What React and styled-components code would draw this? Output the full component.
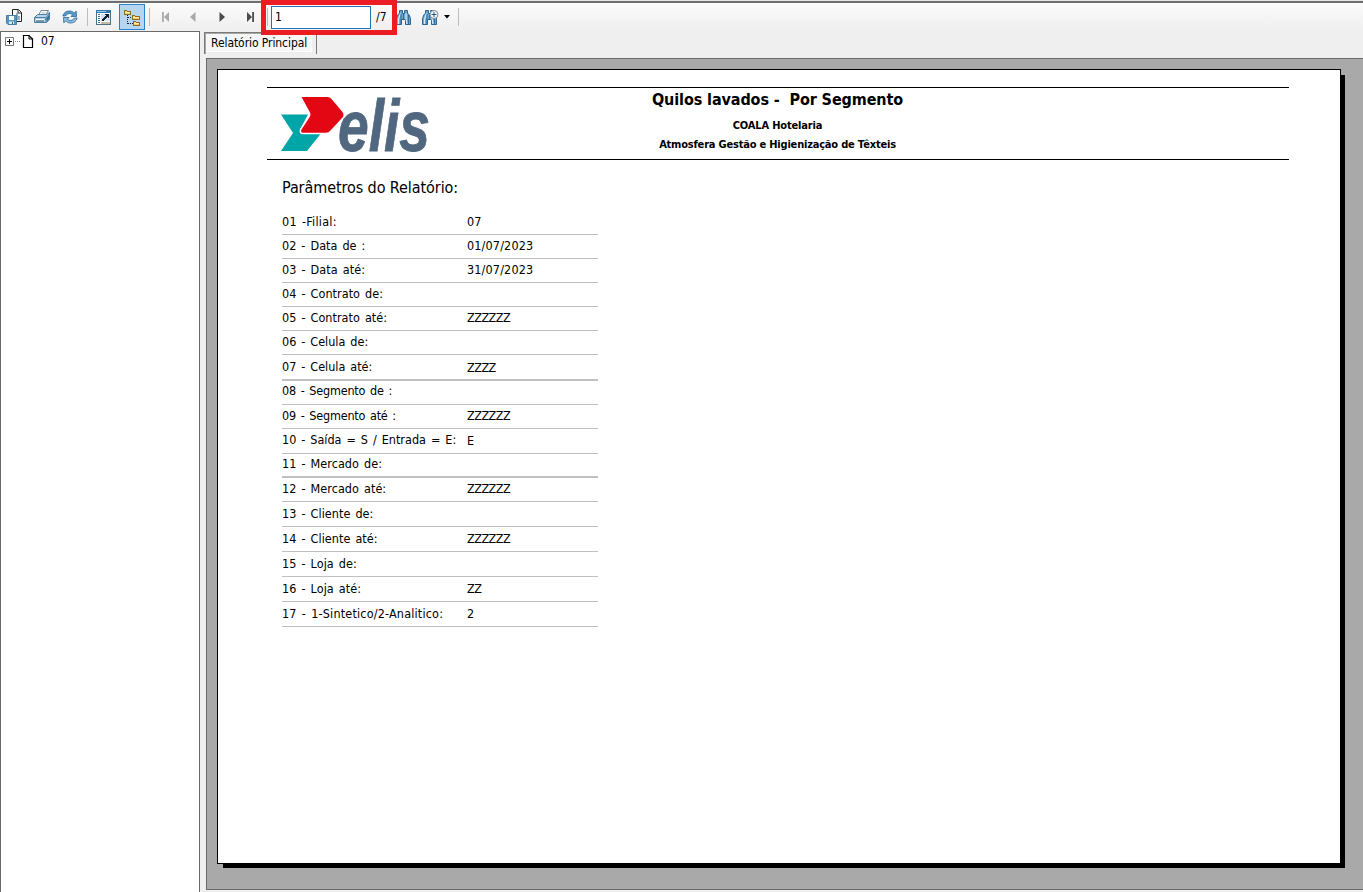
import React from "react";
import styled, { createGlobalStyle } from "styled-components";

const Global = createGlobalStyle`
  * { box-sizing: border-box; }
  body { margin: 0; overflow: hidden; }
`;

const Window = styled.div`
  width: 1363px;
  height: 892px;
  display: flex;
  flex-direction: column;
  background: #efefef;
  color: #000;
  font-family: "DejaVu Sans Condensed", "DejaVu Sans", sans-serif;
  font-stretch: condensed;
  font-size: 12px;
`;

const Toolbar = styled.div`
  position: relative;
  height: 31px;
  flex: none;
  display: flex;
  align-items: center;
  border-top: 1px solid #e6e6e6;
  padding-top: 2px;
  background: linear-gradient(#6e6e6e 0 2px, #fbfbfb 2px, #efefef 100%);
`;

const ToolButton = styled.div`
  width: ${(p) => p.$width || 28}px;
  height: 26px;
  flex: none;
  display: flex;
  align-items: center;
  justify-content: center;
  margin-left: ${(p) => (p.$active ? 2 : 0)}px;
  border: 1px solid ${(p) => (p.$active ? "#2a83c9" : "transparent")};
  background: ${(p) => (p.$active ? "#b5d5f0" : "transparent")};
  svg { display: block; flex: none; }
`;

const Divider = styled.div`
  width: 1px;
  height: 18px;
  flex: none;
  margin: 0 ${(p) => p.$after || 0}px 0 ${(p) => p.$before || 0}px;
  background: #bdbdbd;
`;

const PageInput = styled.input`
  width: 100px;
  height: 23px;
  flex: none;
  margin: 0;
  border: 1px solid #1f72b5;
  border-radius: 0;
  padding: 0 3px 1px;
  outline: none;
  background: #fff;
  color: #000;
  font: 12px "DejaVu Sans Condensed", sans-serif;
`;

const PageTotal = styled.span`
  width: 20px;
  padding-left: 5px;
  white-space: nowrap;
`;

const Highlight = styled.div`
  position: absolute;
  left: 261px;
  top: -1px;
  width: 136px;
  height: 35px;
  border: 5px solid #ec1c24;
  z-index: 2;
`;

const Body = styled.div`
  flex: 1;
  min-height: 0;
  display: flex;
`;

const TreePanel = styled.div`
  width: 200px;
  flex: none;
  border: solid #696969;
  border-width: 1px 1px 0 1px;
  background: #fff;
`;

const TreeNode = styled.div`
  height: 19px;
  display: flex;
  align-items: center;
  padding-left: 3px;
  svg { display: block; }
  span { margin: -2px 0 0 7px; }
`;

const Viewer = styled.div`
  flex: 1;
  min-width: 0;
  display: flex;
  flex-direction: column;
  padding: 1px 0 2px 4px;
`;

const Tab = styled.div`
  width: 113px;
  height: 22px;
  padding: 3px 0 0 6px;
  border: solid #7a7a7a;
  border-width: 1px 1px 0 1px;
  box-shadow: inset 1px 1px 0 #a8a8a8, inset -4px -2px 0 #efefef, inset -5px -3px 0 #fff;
  background: #f6f6f6;
  line-height: 15px;
  font-size: 12px;
  letter-spacing: -0.07px;
  white-space: nowrap;
`;

const Canvas = styled.div`
  flex: 1;
  margin: 4px 0 0 2px;
  padding: 10px 0 0 10px;
  border: solid #696969;
  border-width: 1px 0 1px 1px;
  background: #a9a9a9;
  overflow: hidden;
`;

const Paper = styled.div`
  width: 1124px;
  height: 795px;
  padding: 17px 51px 0 49px;
  border: 1px solid #000;
  background: #fff;
  box-shadow: 4px 4px 0 0 #000;
  clip-path: polygon(0 0, 100% 0, 100% 6px, calc(100% + 4px) 6px, calc(100% + 4px) calc(100% + 4px), 6px calc(100% + 4px), 6px 100%, 0 100%);
`;

const ReportHeader = styled.header`
  width: 1022px;
  height: 73px;
  display: flex;
  border: solid #000;
  border-width: 1px 0;
  svg { display: block; flex: none; margin: 8px 0 0 13px; overflow: visible; }
`;

const Titles = styled.div`
  width: 631px;
  margin-left: 7px;
  display: flex;
  flex-direction: column;
  align-items: center;
  font-weight: bold;
  white-space: pre;
`;

const Title = styled.div`
  margin-top: 2px;
  line-height: 20px;
  font-size: 16px;
  letter-spacing: -0.1px;
`;

const Subtitle = styled.div`
  margin-top: ${(p) => p.$gap}px;
  line-height: 14px;
  font-size: 11px;
  letter-spacing: ${(p) => p.$spacing}px;
`;

const SectionTitle = styled.h2`
  margin: 18px 0 13px 15px;
  line-height: 20px;
  font-size: 16px;
  font-weight: normal;
  letter-spacing: -0.08px;
  white-space: nowrap;
`;

const Params = styled.div`
  width: 316px;
  margin-left: 15px;
`;

const ParamRow = styled.div`
  height: ${(p) => p.$height}px;
  display: flex;
  align-items: flex-end;
  border-bottom: ${(p) => p.$line}px solid #c0c0c0;
  padding-bottom: ${(p) => p.$gap}px;
  line-height: 16px;
  font-size: 12.5px;
  white-space: nowrap;
`;

const Label = styled.span`
  width: 185px;
  letter-spacing: ${(p) => p.$spacing}px;
  word-spacing: 1.4px;
`;

const Value = styled.span`
  margin-bottom: ${(p) => -p.$drop}px;
  letter-spacing: ${(p) => p.$spacing}px;
`;

const SaveIcon = () => (
  <svg width="16" height="16">
    <path d="M6.500 .5h6l3 3v9h-9z" fill="#fff" stroke="#222" />
    <path d="M12 1v3h3" fill="none" stroke="#222" />
    <path d="M9 11V6M11 11V4M13 11V7" stroke="#245b85" />
    <path d="M.5 6.500h10v9H2l-1.500-1.500z" fill="#5c94bd" stroke="#4a7ea5" />
    <path d="M3 7h5v4H3z" fill="#fff" />
    <path d="M3 12.500h5V15H3z" fill="#dbeaf5" />
    <path d="M6 13h1v2H6z" fill="#33617f" />
  </svg>
);

const PrintIcon = () => (
  <svg width="16" height="16">
    <path d="M4.500 6.500 7 1.500h7.500l-3 5z" fill="#fff" stroke="#7c8b98" />
    <path d="M7.500 4h4" stroke="#a9bac8" />
    <path d="m.5 8.500 3-3h9l3-2v7l-3 3H.5z" fill="#b7d4ea" stroke="#4a7da3" />
    <path d="M.5 8.500h11.500v5M12 8.500l3.500-4" fill="none" stroke="#4a7da3" />
    <path d="M2 10h8v1.500H2z" fill="#fff" />
    <path d="M2 12h8" stroke="#27506f" />
    <path d="M12.500 9 15 6v4l-2.500 3z" fill="#326f9c" />
    <path d="M11 10h1v1h-1z" fill="#3aa843" />
  </svg>
);

const RefreshIcon = () => (
  <svg width="16" height="14">
    <path d="M.8 6C1.800 2.500 4.500 .8 8 1c2 .2 3.200 1 4.200 2l2-1.800.3 5.300H9l1.600-1.800C8.500 3 5.500 3 3.500 6z" fill="#5b9bc9" stroke="#2a6797" strokeWidth=".8" />
    <path d="M15.200 8c-1 3.500-3.700 5.200-7.200 5-2-.2-3.200-1-4.200-2l-2 1.800L1.500 7.500H7L5.400 9.300C7.500 11 10.500 11 12.500 8z" fill="#8cbcdf" stroke="#2a6797" strokeWidth=".8" />
  </svg>
);

const PreviewIcon = () => (
  <svg width="15" height="15" shapeRendering="crispEdges">
    <path d="M.5 .5h14v14H.5z" fill="#fff" stroke="#4f7186" />
    <path d="M0 0h15v3H0z" fill="#2f78b0" />
    <path d="M1 1h9v1H1z" fill="#9cc9e8" />
    <path d="M2 4h2v1H2zM2 6h2v1H2zM2 8h2v1H2zM2 10h2v1H2zM2 12h2v1H2z" fill="#356f94" />
    <path d="M5 4h9v7H5z" fill="#cfe5f4" />
    <path d="M9 4h4v4h-1V7h-1v1h-1v1H9v1H8v1H6V9h1V8h1V7h1V6h1V5H9z" fill="#15222c" />
    <path d="M5 12h9v2H5z" fill="#c2bba5" />
  </svg>
);

const TreeIcon = () => (
  <svg width="16" height="17" shapeRendering="crispEdges">
    <path d="M3.500 6v9M4 8.500h4M4 14.500h5" fill="none" stroke="#222" strokeDasharray="1 1" />
    <path d="M.5 1.500h2l1 1h3v3h-6zM8.500 6.500h2l1 1h4v3h-7zM9.500 12.500h2l1 1h3v3h-6z" fill="#f5cd62" stroke="#8d6b28" />
    <path d="M1 3h5v1H1zM9 8h6v1H9zM10 14h5v1h-5z" fill="#ffe99d" />
  </svg>
);

const Arrow = ({ dir, bar, color }) => (
  <svg width="8" height="10">
    <g transform={dir === "left" ? "translate(8 0) scale(-1 1)" : undefined} fill={color}>
      <path d={bar ? "M0 0l5 5-5 5z" : "M1.500 0l5.500 5-5.500 5z"} />
      {bar && <path d="M5.200 0H7v10H5.200z" />}
    </g>
  </svg>
);

const Binoculars = ({ plus }) => (
  <svg width={plus ? 17 : 15} height="15">
    <path d="M3.500 .5h3v3h2v-3h3v3l1.500 1 1.500 4v6H9.500v-5h-4v5H.5v-6l1.500-4 1.500-1z" fill="#6aa5cf" stroke="#2d6592" />
    <path d="M4.500 3.500 2.500 9v5M10 3.500v5l1 5.500" fill="none" stroke="#d6ebf8" strokeWidth="1.200" />
    <path d="M7.500 4v6M5 4v10M12.500 5v9" stroke="#2a6797" fill="none" strokeWidth=".9" />
    {plus && (
      <>
        <circle cx="12" cy="4.500" r="4" fill="#f5f8fa" stroke="#7c8a95" />
        <path d="M9.500 4.500h5M12 2v5" stroke="#245781" />
      </>
    )}
  </svg>
);

const Caret = () => (
  <svg width="6" height="4"><path d="M0 0h6L3 3.500z" fill="#000" /></svg>
);

const TreeGlyphs = () => (
  <svg width="30" height="15">
    <path d="M1.500 3.500h8v8h-8z" fill="#fff" stroke="#777" />
    <path d="M3 7.500h5M5.500 5v5" stroke="#000" />
    <path d="M11 7.500h5" stroke="#888" strokeDasharray="1 1" />
    <path d="M19.500 1.500h5.500l3.500 3.500v8.500h-9z" fill="#fff" stroke="#000" strokeWidth="1.200" />
    <path d="M25 1.500V5h3.500" fill="none" stroke="#000" />
  </svg>
);

const Logo = () => (
  <svg width="175" height="60" viewBox="0 0 175 60">
    <path d="M1 18.500h27l-8 15 3 4.500h17.500L27 55H1l12-18z" fill="#00a5a8" />
    <path d="M21.500 1h26q2.500 0 4 2l11 13q2 3 0 5.500L50 35q-1.500 1.800-4 1.800H23q-3-.3-1.500-3.300L30 20.500q1-2.500 0-4z" fill="#e30613" stroke="#fff" strokeWidth="3" paintOrder="stroke" />
    <text transform="translate(58 55) scale(.766 1)" fill="#50677f" stroke="#50677f" strokeWidth=".8" fontFamily="Liberation Sans, sans-serif" fontSize="72" fontWeight="bold" fontStyle="italic">elis</text>
  </svg>
);

const GRAY = "#a9a9a9";
const DARK = "#4b4b4b";

const params = [
  { label: "01 -Filial:", value: "07", spacing: 0.24 },
  { label: "02 - Data de :", value: "01/07/2023", spacing: 0.03 },
  { label: "03 - Data até:", value: "31/07/2023", spacing: 0.06 },
  { label: "04 - Contrato de:", spacing: 0.05 },
  { label: "05 - Contrato até:", value: "ZZZZZZ", spacing: 0.04 },
  { label: "06 - Celula de:" },
  { label: "07 - Celula até:", value: "ZZZZ", height: 26, line: 2, drop: 1 },
  { label: "08 - Segmento de :", gap: 5, spacing: -0.2 },
  { label: "09 - Segmento até :", value: "ZZZZZZ", spacing: -0.2 },
  { label: "10 - Saída = S / Entrada = E:", value: "E", height: 25, gap: 5, drop: 1 },
  { label: "11 - Mercado de:", line: 2, spacing: 0.05 },
  { label: "12 - Mercado até:", value: "ZZZZZZ", spacing: 0.05 },
  { label: "13 - Cliente de:", height: 25, spacing: 0.05 },
  { label: "14 - Cliente até:", value: "ZZZZZZ", height: 25, spacing: 0.05 },
  { label: "15 - Loja de:", height: 25, spacing: 0.06 },
  { label: "16 - Loja até:", value: "ZZ", height: 25, spacing: 0.06 },
  { label: "17 - 1-Sintetico/2-Analitico:", value: "2", height: 25, spacing: 0.18 },
];

export default function App() {
  return (
    <Window>
      <Global />
      <Toolbar>
        <ToolButton><SaveIcon /></ToolButton>
        <ToolButton><PrintIcon /></ToolButton>
        <ToolButton><RefreshIcon /></ToolButton>
        <Divider $before={3} $after={2} />
        <ToolButton $width={27}><PreviewIcon /></ToolButton>
        <ToolButton $active $width={26}><TreeIcon /></ToolButton>
        <Divider $before={4} $after={1} />
        <ToolButton><Arrow dir="left" bar color={GRAY} /></ToolButton>
        <ToolButton><Arrow dir="left" color={GRAY} /></ToolButton>
        <ToolButton $width={30}><Arrow dir="right" color={DARK} /></ToolButton>
        <ToolButton><Arrow dir="right" bar color={DARK} /></ToolButton>
        <Divider $before={2} $after={3} />
        <PageInput defaultValue="1" />
        <PageTotal>/7</PageTotal>
        <ToolButton $width={25}><Binoculars /></ToolButton>
        <ToolButton $width={28}><Binoculars plus /></ToolButton>
        <ToolButton $width={6}><Caret /></ToolButton>
        <Divider $before={8} />
        <Highlight />
      </Toolbar>
      <Body>
        <TreePanel>
          <TreeNode><TreeGlyphs /><span>07</span></TreeNode>
        </TreePanel>
        <Viewer>
          <Tab>Relatório Principal</Tab>
          <Canvas>
            <Paper>
              <ReportHeader>
                <Logo />
                <Titles>
                  <Title>{"Quilos lavados -  Por Segmento"}</Title>
                  <Subtitle $gap={9} $spacing={-0.16}>COALA Hotelaria</Subtitle>
                  <Subtitle $gap={5} $spacing={-0.2}>Atmosfera Gestão e Higienização de Têxteis</Subtitle>
                </Titles>
              </ReportHeader>
              <SectionTitle>Parâmetros do Relatório:</SectionTitle>
              <Params>
                {params.map((p) => (
                  <ParamRow key={p.label} $height={p.height || 24} $line={p.line || 1} $gap={p.gap || 4}>
                    <Label $spacing={p.spacing || 0}>{p.label}</Label>
                    {p.value && (
                      <Value $drop={p.drop || 0} $spacing={p.value.startsWith("Z") ? -0.5 : 0.15}>
                        {p.value}
                      </Value>
                    )}
                  </ParamRow>
                ))}
              </Params>
            </Paper>
          </Canvas>
        </Viewer>
      </Body>
    </Window>
  );
}
